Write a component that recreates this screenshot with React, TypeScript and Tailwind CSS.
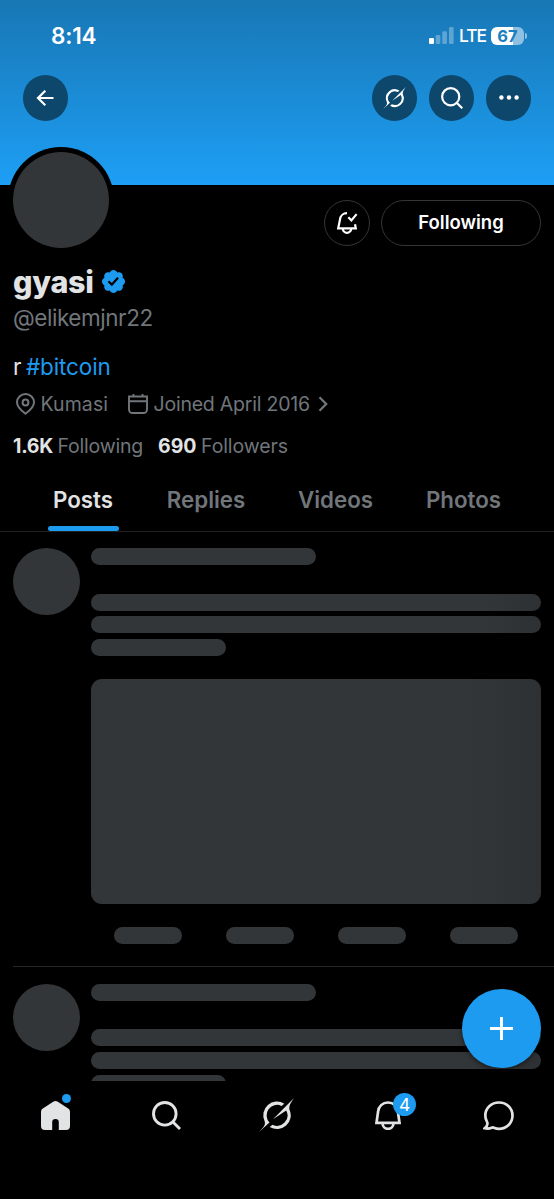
import type { ReactNode } from "react";
import clsx from "clsx";

type IconProps = { className?: string };

function GrokIcon({ className }: IconProps) {
  return (
    <svg viewBox="0 0 35 34" fill="currentColor" className={className}>
      <path d="M35 0L14 21.300L27.200 12.400A10.400 10.400 0 0 1 13.500 26.700L10.700 28.900A13.700 13.700 0 0 0 30.400 11.400C29.600 7.500 32 4.500 35 0z" />
      <path d="M0 34L10.500 24.500A10.400 10.400 0 0 1 22.500 7.900L25.300 5.700A13.700 13.700 0 0 0 5.600 23.200C7 27 4 29.500 0 34z" />
    </svg>
  );
}

function SearchIcon({ className }: IconProps) {
  return (
    <svg viewBox="0 0 29 29" fill="none" stroke="currentColor" strokeWidth="2.9" className={className}>
      <circle cx="12.8" cy="12.8" r="11.3" />
      <path d="M21 21l7 7" />
    </svg>
  );
}

function VerifiedIcon({ className }: IconProps) {
  return (
    <svg viewBox="0 0 22 22" fill="currentColor" className={className}>
      <path d="M20.396 11c-.018-.646-.215-1.275-.57-1.816-.354-.54-.852-.972-1.438-1.246.223-.607.27-1.264.14-1.897-.131-.634-.437-1.218-.882-1.687-.47-.445-1.053-.75-1.687-.882-.633-.13-1.29-.083-1.897.14-.273-.587-.704-1.086-1.245-1.44S11.647 1.62 11 1.604c-.646.017-1.273.213-1.813.568s-.969.854-1.24 1.44c-.608-.223-1.267-.272-1.902-.14-.635.13-1.22.436-1.69.882-.445.47-.749 1.055-.878 1.688-.13.633-.08 1.29.144 1.896-.587.274-1.087.705-1.443 1.245-.356.54-.555 1.17-.574 1.817.02.647.218 1.276.574 1.817.356.54.856.972 1.443 1.245-.224.606-.274 1.263-.144 1.896.13.634.433 1.218.877 1.688.47.443 1.054.747 1.687.878.633.132 1.29.084 1.897-.136.274.586.705 1.084 1.246 1.439.54.354 1.17.551 1.816.569.647-.016 1.276-.213 1.817-.567s.972-.854 1.245-1.44c.604.239 1.266.296 1.903.164.636-.132 1.22-.447 1.68-.907.46-.46.776-1.044.908-1.681s.075-1.299-.165-1.903c.586-.274 1.084-.705 1.439-1.246.354-.54.551-1.17.569-1.816zM9.662 14.85l-3.429-3.428 1.293-1.302 2.072 2.072 4.4-4.794 1.347 1.246z" />
    </svg>
  );
}

function RoundButton({ label, children }: { label: string; children: ReactNode }) {
  return (
    <button
      aria-label={label}
      className="flex h-[45.5px] w-[45.5px] items-center justify-center rounded-full bg-[#0e476c] text-white"
    >
      {children}
    </button>
  );
}

const tabs = [
  { name: "Posts", width: "w-[60px]", active: true },
  { name: "Replies", width: "w-[78px]", active: false },
  { name: "Videos", width: "w-[73px]", active: false },
  { name: "Photos", width: "w-[75px]", active: false },
];

function SkeletonPost() {
  return (
    <div className="flex h-[435.7px] shrink-0 pt-[16.8px] pl-[13px]">
      <div className="h-[67px] w-[67px] shrink-0 rounded-full bg-[#333638]" />
      <div className="ml-[11.4px] flex w-[449.6px] flex-col">
        <div className="h-[17px] w-[224.5px] shrink-0 rounded-full bg-[#333638]" />
        <div className="mt-[28.5px] h-[17px] shrink-0 rounded-full bg-linear-to-r from-[#333638] from-88% to-[#2e3133]" />
        <div className="mt-[5.7px] h-[17px] shrink-0 rounded-full bg-linear-to-r from-[#333638] from-88% to-[#2e3133]" />
        <div className="mt-[5.7px] h-[17px] w-[135px] shrink-0 rounded-full bg-[#333638]" />
        <div className="mt-[23px] h-[225px] shrink-0 rounded-[11px] bg-linear-to-r from-[#333638] from-84% to-[#2e3133]" />
        <div className="mt-[22.5px] flex justify-between px-[22.5px]">
          {[0, 1, 2, 3].map((i) => (
            <div key={i} className="h-[17px] w-[68.5px] rounded-full bg-[#333638]" />
          ))}
        </div>
      </div>
    </div>
  );
}

export default function App() {
  return (
    <div className="relative flex h-[1199px] w-[554px] flex-col overflow-hidden bg-black font-['Inter',sans-serif] text-[#e2e3e4]">
      <main className="flex h-[1081px] shrink-0 flex-col overflow-hidden">
        {/* Banner with status bar */}
        <header className="h-[184.5px] shrink-0 bg-linear-to-b from-[#1877b5] to-[#1d9ff5] text-white">
          <div className="flex h-[75px] items-center justify-between pr-[27px] pb-[4px] pl-[51px]">
            <span className="text-[22.5px] leading-[26px] font-semibold tracking-[-0.2px]">8:14</span>
            <div className="flex items-center">
              <svg className="h-[17px] w-[26px]" viewBox="0 0 26 17" fill="white">
                <rect x="0" y="11" width="5" height="6" rx="1.2" />
                <rect x="6.7" y="8" width="4.6" height="9" rx="1.2" opacity=".3" />
                <rect x="13.3" y="4.2" width="4.6" height="12.8" rx="1.2" opacity=".3" />
                <rect x="20" y="0" width="4.6" height="17" rx="1.2" opacity=".3" />
              </svg>
              <span className="ml-[4.5px] w-[27px] text-[17.5px] leading-5 font-medium tracking-[-1.1px]">LTE</span>
              <div className="ml-[5px] flex h-[18px] w-[33px] items-center justify-center rounded-[6px] bg-linear-to-r from-white from-67% to-[#8fc0e2] to-67% text-[16.5px] leading-[18px] font-bold text-[#1c7fc0]">
                67
              </div>
              <div className="ml-[1px] h-[6px] w-[2px] rounded-r-full bg-[#8fc0e2]" />
            </div>
          </div>
          <div className="flex px-[22.7px]">
            <RoundButton label="Back">
              <svg className="h-[18px] w-[18px]" viewBox="0 0 18 18" fill="none" stroke="currentColor" strokeWidth="2.2">
                <path d="M17.5 9H2M9.300 1.800L2 9L9.300 16.200" />
              </svg>
            </RoundButton>
            <div className="ml-auto flex gap-[11.5px]">
              <RoundButton label="Grok">
                <GrokIcon className="h-[22px] w-[23px]" />
              </RoundButton>
              <RoundButton label="Search">
                <SearchIcon className="h-[22px] w-[22px]" />
              </RoundButton>
              <RoundButton label="More">
                <svg className="h-[5px] w-[20px]" viewBox="0 0 20 5" fill="currentColor">
                  <circle cx="2.4" cy="2.5" r="2.2" />
                  <circle cx="10" cy="2.5" r="2.2" />
                  <circle cx="17.6" cy="2.5" r="2.2" />
                </svg>
              </RoundButton>
            </div>
          </div>
        </header>

        {/* Profile */}
        <section className="relative h-[283.5px] shrink-0 pt-[15.5px] pl-[13px]">
          <div className="absolute -top-[38px] left-[7.5px] rounded-full bg-black p-[5.5px]">
            <div className="h-[95.5px] w-[95.5px] rounded-full bg-[#333638]" />
          </div>

          <div className="flex h-[46px] justify-end gap-[11.5px] pr-[13px]">
            <button
              aria-label="Notifications"
              className="flex h-[45.5px] w-[45.5px] items-center justify-center rounded-full border-[1.5px] border-[#333638] text-white"
            >
              <svg className="-mt-[1px] h-[23px] w-[22px]" viewBox="0 0 22 23" fill="none" stroke="currentColor" strokeWidth="2.2">
                <path d="M11 2.200C7.200 2.200 4.300 4.900 4 8.500L2.200 17.400H19.800L19 13.300" />
                <path d="M6.800 17.600a4.200 4.200 0 0 0 8.400 0" />
                <path d="M12.300 6.300l3.100 3.100 5.200-6.300" />
              </svg>
            </button>
            <button className="h-[45.5px] w-[160px] rounded-full border-[1.5px] border-[#333638] pt-[1px] text-[18.5px] font-semibold text-white">
              Following
            </button>
          </div>

          <div className="mt-[20px] flex h-[30px] items-center">
            <h1 className="w-[81px] pt-[1px] text-[30.5px] leading-[30px] font-extrabold tracking-[-0.3px]">gyasi</h1>
            <VerifiedIcon className="ml-[6px] h-[27px] w-[27px] text-[#1d9bf0]" />
          </div>
          <p className="mt-[6.500px] text-[22.5px] leading-[30px] tracking-[-0.450px] text-[#71767b]">@elikemjnr22</p>
          <p className="mt-[19px] text-[22.5px] leading-[30px] tracking-[-0.1px]">
            r<span className="ml-[4.500px] text-[#1d9bf0]">#bitcoin</span>
          </p>

          <div className="mt-[10px] flex h-6 items-center text-[19.500px] leading-6 text-[#71767b]">
            <svg className="ml-[2.500px] h-[22px] w-[19px]" viewBox="0 0 19 22" fill="none" stroke="currentColor" strokeWidth="2">
              <path d="M9.500 20.700C5 17.500 1 13.800 1 9.300a8.500 8.300 0 0 1 17 0c0 4.500-4 8.200-8.500 11.400z" />
              <circle cx="9.500" cy="9.500" r="2.900" />
            </svg>
            <span className="ml-[6px] w-[68px] tracking-[0.1px]">Kumasi</span>
            <svg className="ml-[19.500px] h-5 w-5" viewBox="0 0 20 20" fill="none" stroke="currentColor" strokeWidth="1.900">
              <path d="M1 2.500H19V15.500a3.500 3.500 0 0 1-3.500 3.500H4.500A3.500 3.500 0 0 1 1 15.500z" />
              <path d="M1 7.300h18M5.500 0v3M14.500 0v3" />
            </svg>
            <span className="ml-[5.500px] w-[156px] tracking-[-0.220px] whitespace-nowrap">Joined April 2016</span>
            <svg className="ml-[8px] h-4 w-[10px]" viewBox="0 0 10 16" fill="none" stroke="currentColor" strokeWidth="2.300">
              <path d="M1.500 1.300l6.700 6.700-6.700 6.700" />
            </svg>
          </div>

          <div className="mt-[18px] flex text-[19.500px] leading-6 whitespace-nowrap text-[#71767b]">
            <b className="w-[44.500px] font-bold tracking-[-0.250px] text-[#e2e3e4]">1.6K</b>
            <span className="w-[100.500px] tracking-[-0.200px]">Following</span>
            <b className="w-[43px] font-bold text-[#e2e3e4]">690</b>
            <span className="tracking-[-0.100px]">Followers</span>
          </div>
        </section>

        {/* Tabs */}
        <nav className="flex h-[63.500px] shrink-0 gap-[54px] border-b border-[#1e2022] pl-[53px]">
          {tabs.map((tab) => (
            <div
              key={tab.name}
              className={clsx(
                "relative flex justify-center pt-[16.500px] text-[22.300px] leading-[30px] font-semibold whitespace-nowrap",
                tab.width,
                tab.active ? "text-[#e2e3e4]" : "text-[#71767b]",
              )}
            >
              {tab.name}
              {tab.active && (
                <span className="absolute -right-[6px] bottom-0 -left-[5.500px] h-[5px] rounded-full bg-[#1d9bf0]" />
              )}
            </div>
          ))}
        </nav>

        {/* Loading posts */}
        <SkeletonPost />
        <div className="-mt-px ml-[13px] h-px shrink-0 bg-[#242628]" />
        <SkeletonPost />
      </main>

      <button
        aria-label="New post"
        className="absolute top-[988.700px] left-[461.500px] flex h-[79.500px] w-[79.500px] items-center justify-center rounded-full bg-[#1d9bf0] shadow-[0_2px_5px_rgba(0,0,0,0.5)]"
      >
        <svg className="h-[23px] w-[23px]" viewBox="0 0 23 23" stroke="white" strokeWidth="2.900">
          <path d="M11.500 0v23M0 11.500h23" />
        </svg>
      </button>

      {/* Bottom navigation */}
      <nav className="grid h-[118px] grid-cols-5 bg-black pt-[17px]">
        <div className="flex h-[35px] items-center justify-center">
          <div className="relative h-[29px] w-[29px]">
            <svg className="h-[29px] w-[29px]" viewBox="0 0 29 29" fill="currentColor">
              <path d="M12.600.600a3.700 3.700 0 0 1 3.800 0L27.200 7.500A3.800 3.800 0 0 1 29 10.700V25a4 4 0 0 1-4 4H17.800V21.300a3.300 3.300 0 0 0-6.600 0V29H4a4 4 0 0 1-4-4V10.700A3.800 3.800 0 0 1 1.800 7.500z" />
            </svg>
            <span className="absolute -top-[7px] -right-[1px] h-[8.500px] w-[8.500px] rounded-full bg-[#1d9bf0]" />
          </div>
        </div>
        <div className="flex h-[35px] items-center justify-center">
          <SearchIcon className="h-[29px] w-[29px]" />
        </div>
        <div className="flex h-[35px] items-center justify-center">
          <GrokIcon className="-mt-[1px] h-[34px] w-[35px]" />
        </div>
        <div className="flex h-[35px] items-center justify-center">
          <div className="relative h-[29px] w-[26px]">
            <svg className="h-[29px] w-[26px]" viewBox="0 0 26 29" fill="none" stroke="currentColor" strokeWidth="2.700">
              <path d="M13 1.500c-5.500 0-9.500 4-9.900 9L1.500 21.900h23L22.900 10.500c-.4-5-4.400-9-9.900-9z" />
              <path d="M7.600 22.500a5.400 5.400 0 0 0 10.800 0" />
            </svg>
            <span className="absolute -top-[8px] left-[18.500px] flex h-[22.500px] w-[22.500px] items-center justify-center rounded-full bg-[#1d9bf0] text-[17.500px] leading-none text-white">
              4
            </span>
          </div>
        </div>
        <div className="flex h-[35px] items-center justify-center">
          <svg className="h-[30px] w-[31px]" viewBox="0 0 31 30" fill="none" stroke="currentColor" strokeWidth="2.700">
            <path d="M16 1.500C8.300 1.500 2.300 7.200 2.300 14.500c0 2.500.7 4.600 1.700 6.400.8 1.600.2 4.300-2.300 6.400 2.500.6 5 .4 7-.6 1-.5 1.700-.3 2.800.2 1.400.6 2.900.9 4.500.9C23.600 27.800 29.500 22 29.500 14.600S23.600 1.500 16 1.500z" />
          </svg>
        </div>
      </nav>
    </div>
  );
}
